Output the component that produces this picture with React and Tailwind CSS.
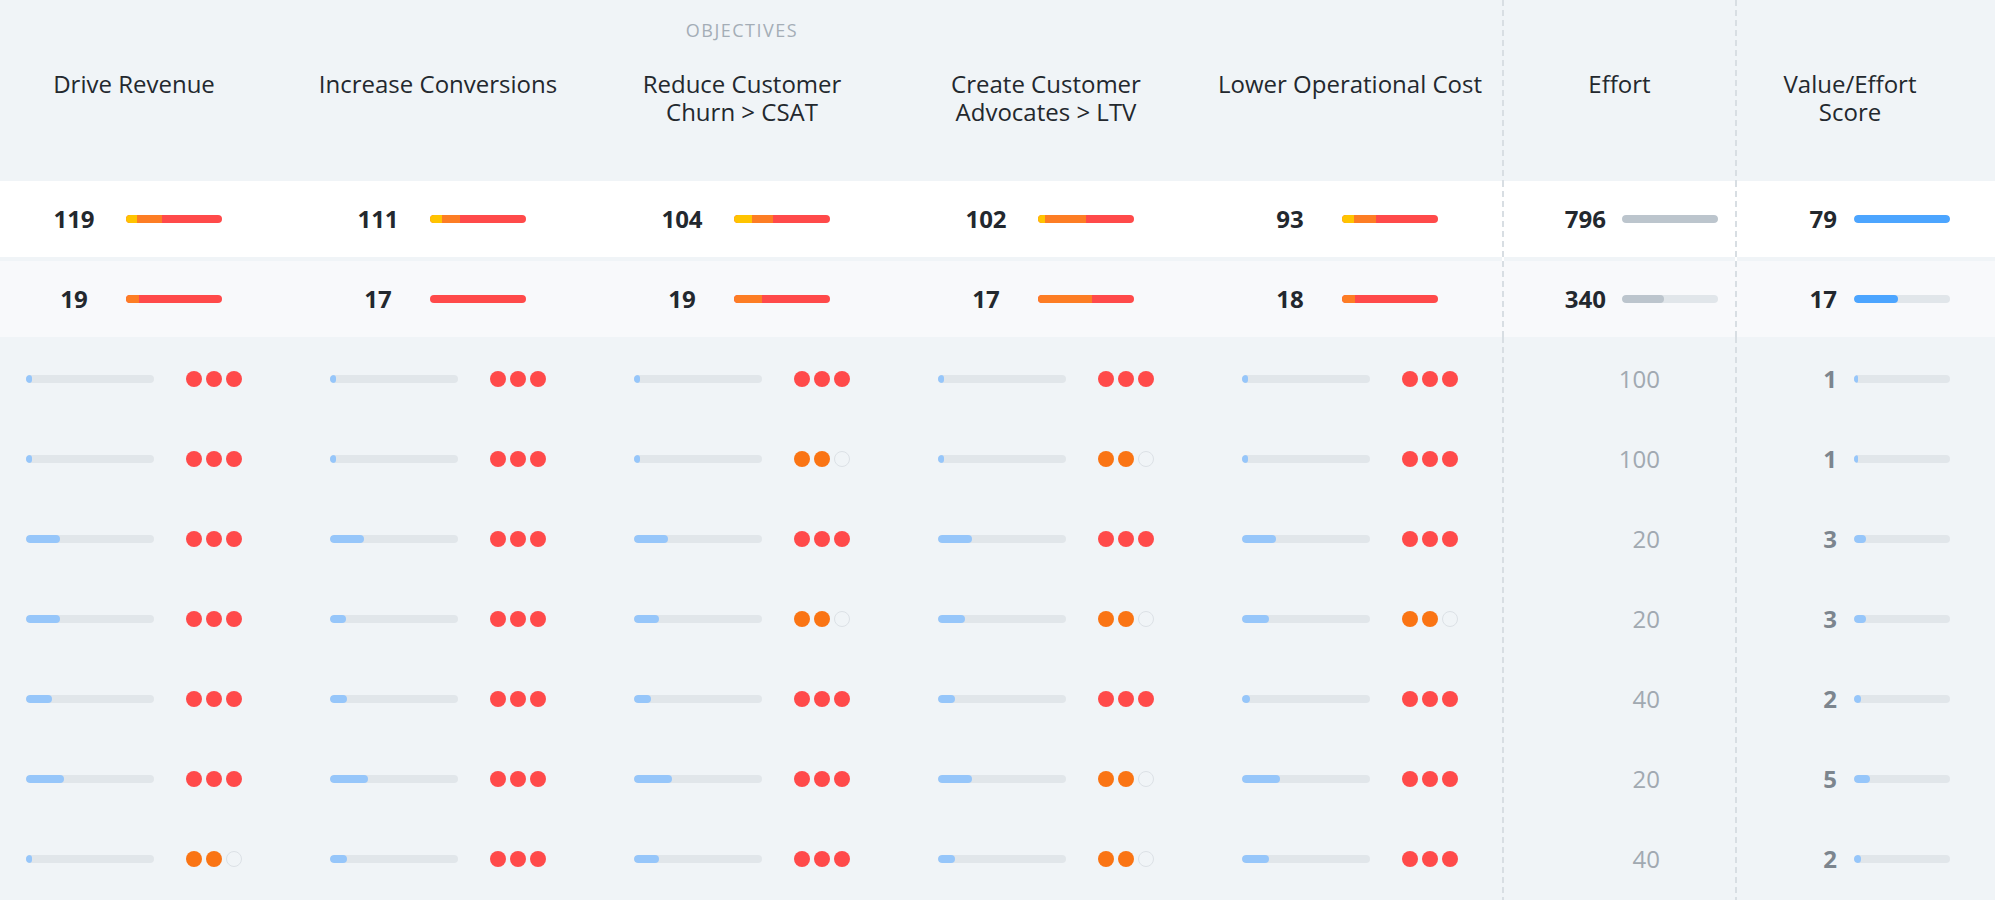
import React from 'react';

const HEADERS = [
  ['Drive Revenue'],
  ['Increase Conversions'],
  ['Reduce Customer', 'Churn > CSAT'],
  ['Create Customer', 'Advocates > LTV'],
  ['Lower Operational Cost'],
];

// top summary rows: [number, yellow px, orange px] (red fills the rest)
const TOTALS = [
  [[119, 11, 25], [111, 12, 18], [104, 18, 21], [102, 7, 41], [93, 12, 22]],
  [[19, 0, 13], [17, 0, 0], [19, 0, 28], [17, 0, 54], [18, 0, 13]],
];

const SIDE_TOTALS = [
  { effort: 796, effortW: 96, score: 79, scoreW: 96 },
  { effort: 340, effortW: 42, score: 17, scoreW: 44 },
];

// body rows: [fill px, dots] per objective, then effort / score
const ROWS = [
  { cells: [[6, 3], [6, 3], [6, 3], [6, 3], [6, 3]], effort: 100, score: 1, scoreW: 4 },
  { cells: [[6, 3], [6, 3], [6, 2], [6, 2], [6, 3]], effort: 100, score: 1, scoreW: 4 },
  { cells: [[34, 3], [34, 3], [34, 3], [34, 3], [34, 3]], effort: 20, score: 3, scoreW: 12 },
  { cells: [[34, 3], [16, 3], [25, 2], [27, 2], [27, 2]], effort: 20, score: 3, scoreW: 12 },
  { cells: [[26, 3], [17, 3], [17, 3], [17, 3], [8, 3]], effort: 40, score: 2, scoreW: 7 },
  { cells: [[38, 3], [38, 3], [38, 3], [34, 2], [38, 3]], effort: 20, score: 5, scoreW: 16 },
  { cells: [[6, 2], [17, 3], [25, 3], [17, 2], [27, 3]], effort: 40, score: 2, scoreW: 7 },
];

const DASH = 'bg-[repeating-linear-gradient(to_bottom,#d8dee3_0px,#d8dee3_6px,transparent_6px,transparent_10px)]';

function Divider() {
  return (
    <div className="flex w-[2px] shrink-0 flex-col gap-[4px]">
      <div className={`h-[181px] -mb-[4px] ${DASH}`} />
      <div className={`h-[80px] -mb-[4px] bg-white ${DASH}`} />
      <div className={`h-[76px] bg-[#f8f9fb] ${DASH}`} />
      <div className={`h-[640px] -mt-[4px] ${DASH}`} />
    </div>
  );
}

function StackBar({ yellow, orange }) {
  return (
    <div className="flex h-[8px] w-[96px] overflow-hidden rounded-full bg-[#ff4a4a]">
      {yellow > 0 && <div className="h-full bg-[#ffc400]" style={{ width: yellow }} />}
      {orange > 0 && <div className="h-full bg-[#fd7d24]" style={{ width: orange }} />}
    </div>
  );
}

function Track({ fill, width = 96, color = 'bg-[#96c6fa]' }) {
  return (
    <div className="h-[8px] overflow-hidden rounded-full bg-[#e1e6ea]" style={{ width }}>
      <div className={`h-full rounded-full ${color}`} style={{ width: fill }} />
    </div>
  );
}

function Dots({ n }) {
  if (n === 3) {
    return (
      <div className="flex gap-[4px]">
        <span className="h-[16px] w-[16px] rounded-full bg-[#ff4a4a]" />
        <span className="h-[16px] w-[16px] rounded-full bg-[#ff4a4a]" />
        <span className="h-[16px] w-[16px] rounded-full bg-[#ff4a4a]" />
      </div>
    );
  }
  return (
    <div className="flex gap-[4px]">
      <span className="h-[16px] w-[16px] rounded-full bg-[#fa7414]" />
      <span className="h-[16px] w-[16px] rounded-full bg-[#fa7414]" />
      <span className="h-[16px] w-[16px] rounded-full border-[1.5px] border-[#dce1e6]" />
    </div>
  );
}

export default function App() {
  return (
    <div className="h-[900px] w-full overflow-hidden bg-[#f0f4f7] font-['Open_Sans',sans-serif] text-[#23282e]">
      <div className="ml-[-18px] flex w-[2013px]">
        {/* objectives */}
        <div className="w-[1520px] shrink-0">
          <div className="h-[181px] pt-[18px]">
            <div className="text-center text-[18px] leading-[24px] tracking-[1.5px] text-[#a4adb6]">OBJECTIVES</div>
            <div className="mt-[28px] grid grid-cols-5">
              {HEADERS.map((lines) => (
                <div key={lines[0]} className="whitespace-nowrap text-center text-[24px] leading-[28px]">
                  {lines[0]}
                  {lines[1] && <br />}
                  {lines[1]}
                </div>
              ))}
            </div>
          </div>
          <div className="flex flex-col gap-[4px]">
            {TOTALS.map((row, ri) => (
              <div key={ri} className={`grid h-[76px] grid-cols-5 ${ri === 0 ? 'bg-white' : 'bg-[#f8f9fb]'}`}>
                {row.map(([num, y, o], ci) => (
                  <div key={ci} className="flex items-center gap-[28px] pl-[68px]">
                    <div className="w-[48px] text-center text-[24px] font-bold leading-none">{num}</div>
                    <StackBar yellow={y} orange={o} />
                  </div>
                ))}
              </div>
            ))}
            {ROWS.map((row, ri) => (
              <div key={ri} className="grid h-[76px] grid-cols-5">
                {row.cells.map(([fill, dots], ci) => (
                  <div key={ci} className="flex items-center gap-[32px] pl-[44px]">
                    <Track fill={fill} width={128} />
                    <Dots n={dots} />
                  </div>
                ))}
              </div>
            ))}
          </div>
        </div>

        <Divider />

        {/* effort */}
        <div className="w-[231px] shrink-0">
          <div className="h-[181px] pt-[70px] text-center text-[24px] leading-[28px]">Effort</div>
          <div className="flex flex-col gap-[4px]">
            {SIDE_TOTALS.map((t, i) => (
              <div key={i} className={`flex h-[76px] items-center gap-[16px] pl-[42px] ${i === 0 ? 'bg-white' : 'bg-[#f8f9fb]'}`}>
                <div className="w-[60px] text-right text-[24px] font-bold leading-none">{t.effort}</div>
                <Track fill={t.effortW} color="bg-[#bcc5cd]" />
              </div>
            ))}
            {ROWS.map((r, i) => (
              <div key={i} className="flex h-[76px] items-center">
                <div className="w-[156px] text-right text-[24px] leading-none text-[#a1a9b1]">{r.effort}</div>
              </div>
            ))}
          </div>
        </div>

        <Divider />

        {/* value / effort score */}
        <div className="w-[258px] shrink-0">
          <div className="h-[181px] pr-[32px] pt-[70px] text-center text-[24px] leading-[28px]">
            Value/Effort
            <br />
            Score
          </div>
          <div className="flex flex-col gap-[4px]">
            {SIDE_TOTALS.map((t, i) => (
              <div key={i} className={`flex h-[76px] items-center gap-[17px] pl-[40px] ${i === 0 ? 'bg-white' : 'bg-[#f8f9fb]'}`}>
                <div className="w-[60px] text-right text-[24px] font-bold leading-none">{t.score}</div>
                <Track fill={t.scoreW} color="bg-[#4ca5ff]" />
              </div>
            ))}
            {ROWS.map((r, i) => (
              <div key={i} className="flex h-[76px] items-center gap-[17px] pl-[40px]">
                <div className="w-[60px] text-right text-[24px] font-bold leading-none text-[#7c858e]">{r.score}</div>
                <Track fill={r.scoreW} />
              </div>
            ))}
          </div>
        </div>
      </div>
    </div>
  );
}
